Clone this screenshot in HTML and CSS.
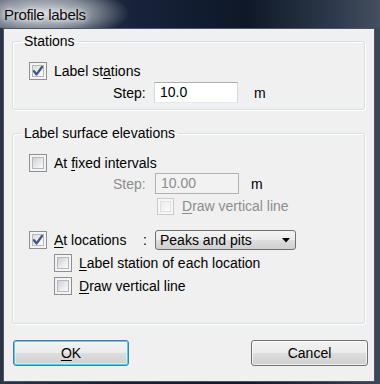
FILE: index.html
```html
<!DOCTYPE html>
<html>
<head>
<meta charset="utf-8">
<link rel="stylesheet" href="styles.css">
</head>
<body>
<div class="window">
  <div class="titlebar"><span class="title">Profile labels</span></div>
  <div class="client">
    <fieldset class="group g1">
      <legend>Stations</legend>
      <div class="row check-row">
        <span class="cb checked"><svg viewBox="0 0 18 18" width="18" height="18"><path d="M5 9.2 L7.6 12.4 L13 5" fill="none" stroke="#3f5390" stroke-width="2.3" stroke-linecap="round" stroke-linejoin="round"/></svg></span>
        <span class="lbl">Label st<u>a</u>tions</span>
      </div>
      <div class="row step-row">
        <span class="step-lbl">Step:</span>
        <span class="input">10.0</span>
        <span class="unit">m</span>
      </div>
    </fieldset>

    <fieldset class="group g2">
      <legend>Label surface elevations</legend>
      <div class="row check-row">
        <span class="cb"></span>
        <span class="lbl">At <u>f</u>ixed intervals</span>
      </div>
      <div class="row step-row disabled">
        <span class="step-lbl">Step:</span>
        <span class="input">10.00</span>
        <span class="unit">m</span>
      </div>
      <div class="row check-row draw-row disabled">
        <span class="cb"></span>
        <span class="lbl"><u>D</u>raw vertical line</span>
      </div>
      <div class="row loc-row">
        <span class="cb checked"><svg viewBox="0 0 18 18" width="18" height="18"><path d="M5 9.2 L7.6 12.4 L13 5" fill="none" stroke="#3f5390" stroke-width="2.3" stroke-linecap="round" stroke-linejoin="round"/></svg></span>
        <span class="lbl loc-lbl"><u>A</u>t locations</span>
        <span class="colon">:</span>
        <span class="combo"><span class="combo-text">Peaks and pits</span><svg class="arrow" viewBox="0 0 8 5" width="8" height="5"><path d="M0 0 H8 L4 4.5 Z" fill="#000"/></svg></span>
      </div>
      <div class="row check-row sub-row first-sub">
        <span class="cb"></span>
        <span class="lbl"><u>L</u>abel station of each location</span>
      </div>
      <div class="row check-row sub-row">
        <span class="cb"></span>
        <span class="lbl"><u>D</u>raw vertical line</span>
      </div>
    </fieldset>

    <div class="buttons">
      <span class="btn default"><span><u>O</u>K</span></span>
      <span class="btn">Cancel</span>
    </div>
  </div>
</div>
</body>
</html>
```

FILE: styles.css
```css
* { box-sizing: border-box; }
html, body { margin: 0; padding: 0; }
body {
  font-family: "Liberation Sans", Arial, sans-serif;
  font-size: 14px;
  color: #000;
  background: #1b2436;
}
u { text-decoration: underline; text-underline-offset: 2px; }

.window {
  width: 380px;
  height: 384px;
  display: flex;
  flex-direction: column;
  padding: 0 5px 2px 3px;
  background: linear-gradient(90deg, #2c3545 0%, #162032 30%, #0f192a 65%, #2a3547 90%, #3d4758 100%);
}

.titlebar {
  height: 28px;
  display: flex;
  align-items: center;
  margin-left: -3px;
  margin-right: -5px;
  padding-left: 4px;
  background:
    radial-gradient(ellipse 85px 28px at 44px 13px, rgba(214,218,223,0.95) 0%, rgba(165,173,182,0.75) 55%, rgba(40,50,65,0) 100%),
    linear-gradient(90deg, #3b4453 0%, #18223a 35%, #0e1828 65%, #2e394b 88%, #454f60 100%);
}
.title {
  font-size: 15px;
  letter-spacing: -0.3px;
  color: #0a0a0a;
  text-shadow: 0 0 5px #fff, 0 0 9px rgba(255,255,255,0.9);
}

.client {
  flex: 1;
  background: #f0f0f0;
  border: 1px solid #4e5665;
  display: flex;
  flex-direction: column;
}

.group {
  margin: 0 0 0 8px;
  width: 353px;
  min-width: 0;
  border: 1px solid #d5dfe5;
  border-radius: 3px;
  box-shadow: inset 1px 1px 0 #fff, 1px 1px 0 #fff;
  padding: 13px 0 6px 8px;
}
.group legend {
  padding: 0 3px;
  line-height: 16px;
  font-size: 14px;
}
.g1 { margin-top: 4px; }
.g2 { margin-top: 15px; padding-bottom: 28px; }

.row {
  display: flex;
  align-items: center;
  margin-left: 8px;
}
.check-row { height: 18px; }
.lbl { margin-left: 7px; white-space: nowrap; }

.cb {
  width: 18px;
  height: 18px;
  flex: none;
  border: 1px solid #8e8f8f;
  background: #f4f4f4;
  position: relative;
  display: flex;
}
.cb::before {
  content: "";
  position: absolute;
  left: 2px; top: 2px; right: 2px; bottom: 2px;
  border: 1px solid #b4b7bb;
  background: linear-gradient(135deg, #cfd1d4 0%, #e6e7e8 50%, #fbfbfb 100%);
}
.cb svg { position: relative; margin: -1px; }
.cb.checked::before {
  background: linear-gradient(135deg, #dcdde0 0%, #eeeeef 50%, #fdfdfd 100%);
}

.step-row {
  height: 21px;
  margin-top: 2px;
  padding-left: 84px;
}
.step-lbl { width: 33px; }
.input {
  margin-left: 8px;
  width: 84px;
  height: 21px;
  border: 1px solid #abadb3;
  border-left-color: #d5d8de;
  border-right-color: #d5d8de;
  border-bottom-color: #e3e9ef;
  background: #fff;
  padding-left: 5px;
  line-height: 19px;
}
.unit { margin-left: 16px; }

.g2 .step-row { margin-top: 1px; }
.g2 .step-row .input { margin-left: 9px; }
.g2 .step-row .unit { margin-left: 12px; }

.disabled .step-lbl,
.disabled .lbl,
.disabled .input { color: #8d8d8d; }
.disabled .input {
  background: #f2f2f2;
  border-color: #adb2b5;
}
.draw-row {
  margin-top: 3px;
  padding-left: 128px;
}
.draw-row .cb { width: 17px; height: 17px; }
.draw-row .lbl { margin-left: 8px; }
.disabled .cb { border-color: #c9cacb; background: #f7f7f7; }
.disabled .cb::before { border-color: #dedfe0; background: linear-gradient(135deg, #eaebec 0%, #f3f3f3 50%, #fdfdfd 100%); }

.loc-row {
  height: 20px;
  margin-top: 15px;
}
.loc-lbl { width: 89px; }
.colon { width: 4px; }
.combo {
  margin-left: 8px;
  width: 141px;
  height: 20px;
  border: 1px solid #707070;
  border-radius: 3px;
  background: linear-gradient(180deg, #f3f3f3 0%, #ebebeb 48%, #dddddd 52%, #cfcfcf 100%);
  display: flex;
  align-items: center;
  justify-content: space-between;
  padding: 0 5px 0 4px;
}
.combo-text { line-height: 18px; }
.arrow { margin-top: 1px; }

.sub-row { padding-left: 25px; margin-top: 5px; }
.first-sub { margin-top: 4px; }

.buttons {
  display: flex;
  justify-content: space-between;
  margin-top: 16px;
  padding: 0 6px 0 9px;
}
.btn {
  height: 26px;
  width: 117px;
  border: 1px solid #707070;
  border-radius: 3px;
  background: linear-gradient(180deg, #f2f2f2 0%, #ebebeb 48%, #dddddd 52%, #cfcfcf 100%);
  box-shadow: inset 0 0 0 1px rgba(255,255,255,0.7);
  display: flex;
  align-items: center;
  justify-content: center;
}
.btn.default {
  width: 116px;
  border-color: #3c7fb1;
  box-shadow: inset 0 0 0 1px #48d3f5, inset 0 0 0 2px rgba(255,255,255,0.4);
}
```
